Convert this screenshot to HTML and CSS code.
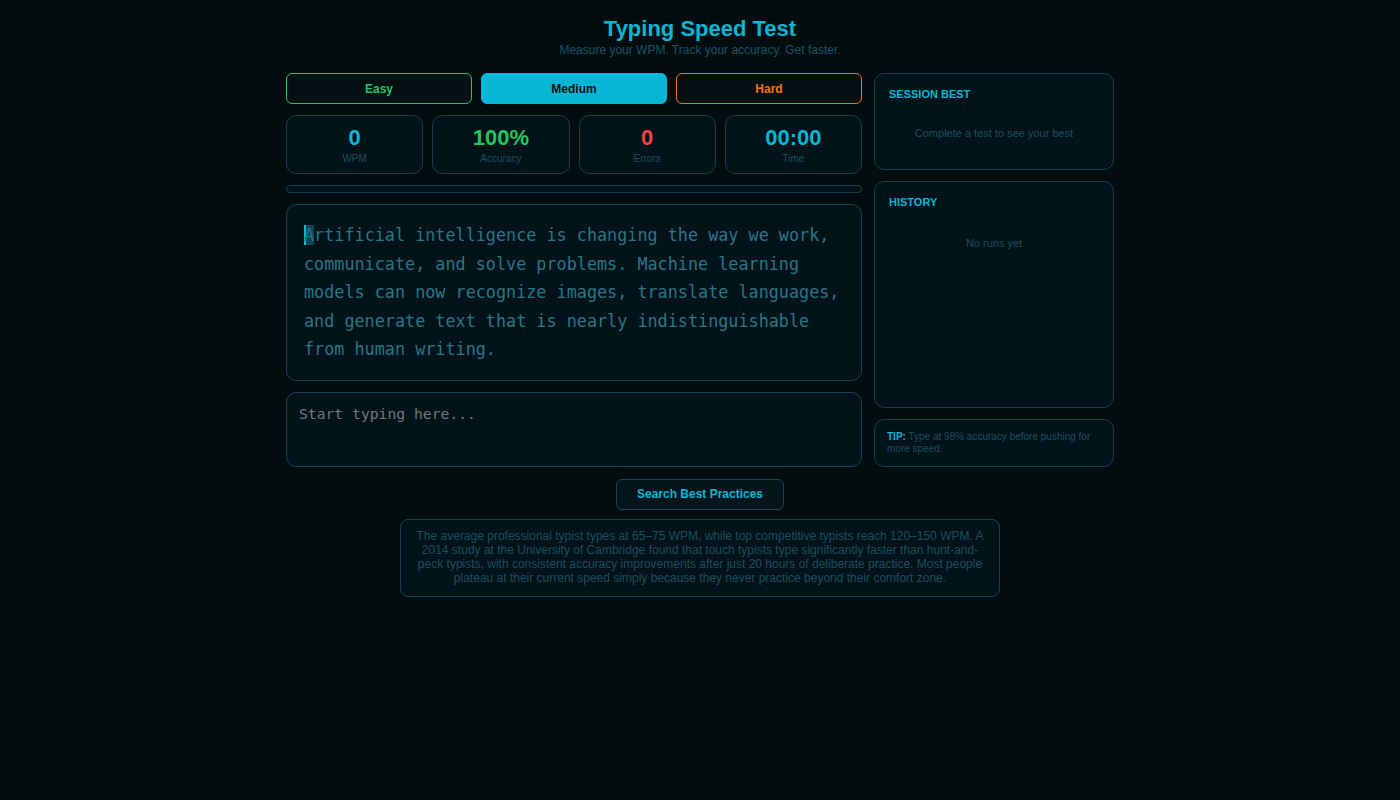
FILE: index.html
```html
<!DOCTYPE html>
<html lang="en">

<head>
    <meta charset="UTF-8">
    <meta name="viewport" content="width=device-width, initial-scale=1.0">
    <title>Typing Speed Test</title>
    <link rel="stylesheet" href="styles.css">
</head>

<body>
    <header class="page-header">
        <h1>Typing Speed Test</h1>
        <p class="subtitle">Measure your WPM. Track your accuracy. Get faster.</p>
    </header>

    <div class="layout">
        <div class="main-col">
            <div class="difficulty">
                <button class="diff easy">Easy</button>
                <button class="diff medium active">Medium</button>
                <button class="diff hard">Hard</button>
            </div>

            <div class="stats">
                <div class="stat">
                    <div class="stat-value wpm">0</div>
                    <div class="stat-label">WPM</div>
                </div>
                <div class="stat">
                    <div class="stat-value accuracy">100%</div>
                    <div class="stat-label">Accuracy</div>
                </div>
                <div class="stat">
                    <div class="stat-value errors">0</div>
                    <div class="stat-label">Errors</div>
                </div>
                <div class="stat">
                    <div class="stat-value time">00:00</div>
                    <div class="stat-label">Time</div>
                </div>
            </div>

            <div class="progress">
                <div class="progress-fill" style="width: 0%;"></div>
            </div>

            <div class="passage" id="passage"><span class="current">A</span>rtificial intelligence is changing the way we work, communicate, and solve problems. Machine learning models can now recognize images, translate languages, and generate text that is nearly indistinguishable from human writing.</div>

            <textarea class="typing-input" id="typingInput" placeholder="Start typing here..."></textarea>
        </div>

        <aside class="side-col">
            <div class="panel session">
                <h3>SESSION BEST</h3>
                <p class="empty">Complete a test to see your best</p>
            </div>
            <div class="panel history">
                <h3>HISTORY</h3>
                <p class="empty">No runs yet</p>
            </div>
            <div class="panel tip">
                <strong>TIP:</strong> Type at 98% accuracy before pushing for more speed.
            </div>
        </aside>
    </div>

    <div class="search-row">
        <button class="search-btn">Search Best Practices</button>
    </div>

    <div class="info-box">
        The average professional typist types at 65–75 WPM, while top competitive typists reach 120–150 WPM. A 2014 study at the University of Cambridge found that touch typists type significantly faster than hunt-and-peck typists, with consistent accuracy improvements after just 20 hours of deliberate practice. Most people plateau at their current speed simply because they never practice beyond their comfort zone.
    </div>
</body>

</html>
```

FILE: styles.css
```css
body {
    font-family: "Liberation Sans", Arial, sans-serif;
    margin: 0;
    padding: 16px 0 40px;
    background: #020d10;
    color: #1f5868;
    min-height: 100vh;
    box-sizing: border-box;
}

.page-header {
    text-align: center;
    margin-bottom: 16px;
}

.page-header h1 {
    margin: 0;
    font-size: 22px;
    line-height: 26px;
    color: #06b6d4;
}

.subtitle {
    margin: 1px 0 0;
    font-size: 12px;
    line-height: 14px;
    color: #1a5365;
}

.layout {
    width: 828px;
    margin: 0 auto;
    display: grid;
    grid-template-columns: 1fr 240px;
    gap: 12px;
}

.main-col {
    display: flex;
    flex-direction: column;
    gap: 11px;
}

.difficulty {
    display: grid;
    grid-template-columns: repeat(3, 1fr);
    gap: 9px;
}

.diff {
    height: 31px;
    border-radius: 6px;
    background: #030f13;
    font-family: inherit;
    font-size: 12px;
    font-weight: bold;
    cursor: pointer;
}

.easy {
    border: 1px solid #22c55e;
    color: #22c55e;
}

.medium {
    border: 1px solid #06b6d4;
    color: #06b6d4;
}

.medium.active {
    background: #06b6d4;
    color: #031014;
}

.hard {
    border: 1px solid #f97316;
    color: #f97316;
}

.stats {
    display: grid;
    grid-template-columns: repeat(4, 1fr);
    gap: 9px;
}

.stat {
    background: #03131a;
    border: 1px solid #143f4b;
    border-radius: 10px;
    padding: 9px 0 8px;
    text-align: center;
}

.stat-value {
    font-size: 22px;
    line-height: 26px;
    font-weight: bold;
}

.wpm,
.time {
    color: #06b6d4;
}

.accuracy {
    color: #22c55e;
}

.errors {
    color: #ef4444;
}

.stat-label {
    margin-top: 2px;
    font-size: 10px;
    line-height: 12px;
    color: #1a4f5f;
}

.progress {
    height: 6px;
    border: 1px solid #143f4b;
    border-radius: 4px;
    background: #03131a;
    overflow: hidden;
}

.progress-fill {
    height: 100%;
    background: #06b6d4;
}

.passage {
    background: #03131a;
    border: 1px solid #164450;
    border-radius: 10px;
    padding: 16px 17px;
    font-family: "DejaVu Sans Mono", monospace;
    font-size: 16.8px;
    line-height: 1.7;
    color: #277686;
}

.current {
    background: #0d4656;
    box-shadow: inset 2px 0 0 #06b6d4;
}

.typing-input {
    height: 75px;
    box-sizing: border-box;
    background: #03131a;
    border: 1px solid #164450;
    border-radius: 10px;
    padding: 12px;
    font-family: "DejaVu Sans Mono", monospace;
    font-size: 14.7px;
    color: #c8d4d8;
    resize: none;
    outline: none;
}

.typing-input::placeholder {
    color: #6b7a7f;
}

.side-col {
    display: flex;
    flex-direction: column;
    gap: 11px;
}

.panel {
    background: #03131a;
    border: 1px solid #143f4b;
    border-radius: 10px;
    padding: 14px;
}

.panel h3 {
    margin: 0;
    font-size: 11px;
    line-height: 13px;
    color: #06b6d4;
}

.empty {
    margin: 12px 0 0;
    padding: 14px 0 15px;
    text-align: center;
    font-size: 11px;
    line-height: 13px;
    color: #1a4f5f;
}

.history {
    flex: 1;
}

.history .empty {
    padding-top: 16px;
}

.tip {
    padding: 11px 12px;
    font-size: 10px;
    line-height: 12px;
    color: #1a4f5f;
}

.tip strong {
    color: #06b6d4;
}

.search-row {
    text-align: center;
    margin-top: 12px;
}

.search-btn {
    height: 31px;
    padding: 0 20px;
    background: #04161c;
    border: 1px solid #164854;
    border-radius: 6px;
    color: #06b6d4;
    font-family: inherit;
    font-size: 12px;
    font-weight: bold;
    cursor: pointer;
}

.info-box {
    width: 600px;
    box-sizing: border-box;
    margin: 9px auto 0;
    padding: 9px 14px 11px;
    background: #03131a;
    border: 1px solid #164450;
    border-radius: 8px;
    text-align: center;
    font-size: 12px;
    line-height: 14px;
    color: #1a4f5f;
}
```
